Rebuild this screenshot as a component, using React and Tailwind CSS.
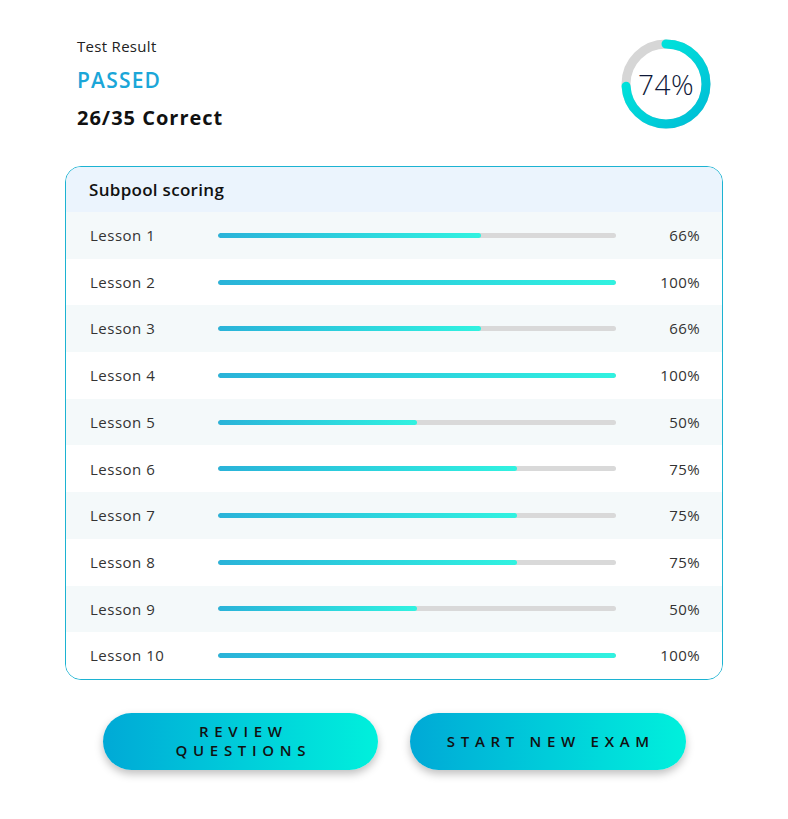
const lessons = [
  { name: 'Lesson 1', pct: 66 },
  { name: 'Lesson 2', pct: 100 },
  { name: 'Lesson 3', pct: 66 },
  { name: 'Lesson 4', pct: 100 },
  { name: 'Lesson 5', pct: 50 },
  { name: 'Lesson 6', pct: 75 },
  { name: 'Lesson 7', pct: 75 },
  { name: 'Lesson 8', pct: 75 },
  { name: 'Lesson 9', pct: 50 },
  { name: 'Lesson 10', pct: 100 },
];

function Ring({ pct }) {
  const r = 40;
  const c = 2 * Math.PI * r;
  return (
    <div className="relative w-[92px] h-[92px]">
      <svg width="92" height="92" viewBox="0 0 92 92">
        <defs>
          <linearGradient id="ring" x1="1" y1="0" x2="0" y2="1">
            <stop offset="0" stopColor="#00ecdc" />
            <stop offset="1" stopColor="#00bcd6" />
          </linearGradient>
        </defs>
        <circle cx="46" cy="46" r={r} fill="none" stroke="#d6d6d6" strokeWidth="9" />
        <circle
          cx="46"
          cy="46"
          r={r}
          fill="none"
          stroke="url(#ring)"
          strokeWidth="9"
          strokeLinecap="round"
          strokeDasharray={`${(c * pct) / 100} ${c}`}
          transform="rotate(-90 46 46)"
        />
      </svg>
      <div className="absolute inset-0 flex items-center justify-center text-[28px] text-[#0e1838] font-light tracking-[0.5px]">
        {pct}%
      </div>
    </div>
  );
}

export default function App() {
  return (
    <div className="w-[788px] h-[819px] bg-white font-['Open_Sans','Noto_Sans',sans-serif]">
      <div className="w-[658px] ml-[65px] pt-[36px]">
        <div className="flex items-start justify-between pr-[11px]">
          <div className="pl-[12px]">
            <div className="text-[15px] text-[#222] leading-5 tracking-[0.3px]">Test Result</div>
            <div className="text-[21px] text-[#1ba6d8] font-semibold leading-6 mt-[12px] tracking-[1.2px]">PASSED</div>
            <div className="text-[20px] text-[#111] font-bold leading-6 mt-[14px] tracking-[1px]">26/35 Correct</div>
          </div>
          <div className="mt-[2px]">
            <Ring pct={74} />
          </div>
        </div>

        <div className="mt-[36px] border border-[#1cb3d2] rounded-[16px] overflow-hidden">
          <div className="h-[45px] bg-[#ebf4fd] flex items-center pl-[23px] text-[17px] text-[#111] font-semibold tracking-[0.3px]">
            Subpool scoring
          </div>
          {lessons.map((l, i) => (
            <div
              key={l.name}
              className={`h-[46.7px] flex items-center pl-[24px] pr-[22px] ${i % 2 === 0 ? 'bg-[#f4f9fa]' : 'bg-white'}`}
            >
              <div className="w-[128px] text-[15px] text-[#333] tracking-[0.5px]">{l.name}</div>
              <div className="w-[398px] h-[5px] bg-[#d9d9d9] rounded-full overflow-hidden">
                <div
                  className="h-full rounded-full bg-gradient-to-r from-[#2ab3d9] to-[#31f2e0]"
                  style={{ width: `${l.pct}%` }}
                />
              </div>
              <div className="flex-1 text-right text-[15px] text-[#333] tracking-[0.4px]">{l.pct}%</div>
            </div>
          ))}
        </div>

        <div className="flex justify-between pl-[38px] pr-[37px] mt-[33px]">
          <button className="w-[275px] h-[57px] rounded-full bg-gradient-to-r from-[#00a9d6] to-[#00f0dc] shadow-[0_4px_8px_rgba(0,0,0,0.25)] text-[15px] text-[#111] tracking-[0.38em] leading-[19px] font-semibold pl-[0.38em]">
            REVIEW
            <br />
            QUESTIONS
          </button>
          <button className="w-[276px] h-[57px] rounded-full bg-gradient-to-r from-[#00a9d6] to-[#00f0dc] shadow-[0_4px_8px_rgba(0,0,0,0.25)] text-[15px] text-[#111] tracking-[0.38em] font-semibold pl-[0.38em]">
            START NEW EXAM
          </button>
        </div>
      </div>
    </div>
  );
}
